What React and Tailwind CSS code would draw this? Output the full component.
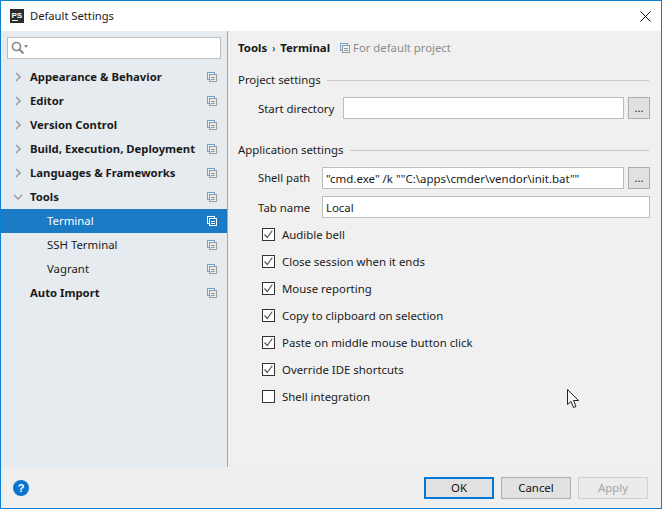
import React from "react";

function CopyIcon({ active, className = "" }) {
  const back = active ? "#ffffff" : "#6fa3d2";
  const front = active ? "#ffffff" : "#9a9a9a";
  return (
    <svg width="10" height="10" viewBox="0 0 10 10" className={className} shapeRendering="crispEdges" fill="none">
      <path d="M2.5 7.5H0.5V0.5H7.5V2.5" stroke={back} />
      <rect x="2.5" y="2.5" width="7" height="7" stroke={front} />
      <path d="M4 5.5H8M4 7.5H8" stroke={front} />
    </svg>
  );
}

function Chevron({ open }) {
  return (
    <svg width="10" height="10" viewBox="0 0 10 10" fill="none" stroke="#9a9a9a" strokeWidth="1.5">
      {open ? <path d="M1 3l4 4 4-4" /> : <path d="M3 1l4 4-4 4" />}
    </svg>
  );
}

function TreeRow({ label, level, arrow, open, bold, selected }) {
  return (
    <div className={"h-6 flex items-center pr-[10px] whitespace-nowrap " + (selected ? "bg-[#1a7ac4] text-white" : "text-[#1a1a1a]")}>
      <div className={"flex items-center flex-1 " + (level === 1 ? "pl-[46px]" : "pl-[12px]")}>
        {level === 0 && (
          <span className="w-[17px] flex items-center">{arrow && <Chevron open={open} />}</span>
        )}
        <span className={bold ? "font-bold text-[11.3px]" : ""}>{label}</span>
      </div>
      <CopyIcon active={selected} />
    </div>
  );
}

function Group({ title }) {
  return (
    <div className="flex items-center gap-[6px] h-5 pr-[12px]">
      <span className="pb-[1px]">{title}</span>
      <div className="flex-1 h-px bg-[#c8c8c8]" />
    </div>
  );
}

function Input({ value, className = "" }) {
  return (
    <div className={"h-[22px] bg-white border border-[#bdbdbd] flex items-center pl-[3px] pt-[1px] whitespace-nowrap overflow-hidden " + className}>
      {value}
    </div>
  );
}

function Dots() {
  return (
    <div className="w-[22px] h-[22px] bg-[#e1e1e1] border border-[#adadad] flex items-center justify-center text-[11px] leading-none pb-[1px] shrink-0">
      ...
    </div>
  );
}

function Check({ label, checked = true }) {
  return (
    <div className="h-[27px] flex items-center">
      <div className="w-[13px] h-[13px] border border-[#333333] bg-white flex items-center justify-center">
        {checked && (
          <svg width="11" height="11" viewBox="0 0 11 11" fill="none" stroke="#555555" strokeWidth="1.2">
            <path d="M1.5 5.5l2.8 3 5-7" />
          </svg>
        )}
      </div>
      <span className="ml-[7px] pt-[1px]">{label}</span>
    </div>
  );
}

function Btn({ label, variant }) {
  const cls =
    variant === "primary"
      ? "border-2 border-[#0078d7] bg-[#e1e1e1] text-[#111]"
      : variant === "disabled"
      ? "border border-[#d0d0d0] bg-[#ebebeb] text-[#a6a6a6]"
      : "border border-[#adadad] bg-[#e1e1e1] text-[#111]";
  return <div className={"w-[70px] h-[22px] flex items-center justify-center " + cls}>{label}</div>;
}

export default function App() {
  return (
    <div className="relative w-[662px] h-[509px] border border-[#0c7fd3] bg-[#f0f0f0] flex flex-col text-[11.4px] text-[#1a1a1a] font-['Noto_Sans',sans-serif] overflow-hidden">
      <div className="h-[30px] bg-white flex items-center pl-[9px] pr-[10px] shrink-0">
        <svg width="14" height="14" viewBox="0 0 14 14" className="mr-[6px]">
          <rect width="14" height="14" fill="#2b2b2b" />
          <rect x="2" y="11" width="6" height="1" fill="#fff" />
          <text x="1.5" y="8.5" fontSize="8" fontWeight="700" fill="#fff" fontFamily="Liberation Sans">PS</text>
        </svg>
        <span className="flex-1 text-[11.2px]">Default Settings</span>
        <svg width="11" height="11" viewBox="0 0 11 11" stroke="#111" fill="none">
          <path d="M0.5 0.5l10 10M10.5 0.5l-10 10" />
        </svg>
      </div>

      <div className="flex flex-1 min-h-0">
        <div className="w-[227px] bg-[#e6ebf0] border-r border-[#a8a8a8] shrink-0 flex flex-col">
          <div className="px-[6px] pt-[6px] pb-[6px]">
            <div className="h-[22px] bg-white border border-[#bdbdbd] flex items-center pl-[3px]">
              <svg width="18" height="14" viewBox="0 0 18 14" fill="none" stroke="#8a8a8a" strokeWidth="1.7">
                <circle cx="5.5" cy="5.5" r="4" />
                <path d="M8.5 8.5l4 4" strokeWidth="2.2" />
                <path d="M13 4h4l-2 3z" fill="#8a8a8a" stroke="none" />
              </svg>
            </div>
          </div>
          <TreeRow label="Appearance & Behavior" level={0} arrow bold />
          <TreeRow label="Editor" level={0} arrow bold />
          <TreeRow label="Version Control" level={0} arrow bold />
          <TreeRow label="Build, Execution, Deployment" level={0} arrow bold />
          <TreeRow label="Languages & Frameworks" level={0} arrow bold />
          <TreeRow label="Tools" level={0} arrow open bold />
          <TreeRow label="Terminal" level={1} selected />
          <TreeRow label="SSH Terminal" level={1} />
          <TreeRow label="Vagrant" level={1} />
          <TreeRow label="Auto Import" level={0} bold />
        </div>

        <div className="flex-1 pl-[10px] flex flex-col whitespace-nowrap">
          <div className="h-[34px] flex items-center">
            <span className="font-bold">Tools</span>
            <span className="mx-[5px] text-[10px]">›</span>
            <span className="font-bold">Terminal</span>
            <CopyIcon className="ml-[10px] mr-[3px]" />
            <span className="text-[#8c8c8c] text-[11.3px]">For default project</span>
          </div>
          <div className="mt-[5px]"><Group title="Project settings" /></div>
          <div className="flex items-center mt-[7px] pl-[20px]">
            <span className="w-[85px] pt-[1px]">Start directory</span>
            <Input className="w-[281px]" />
            <div className="ml-[4px]"><Dots /></div>
          </div>
          <div className="mt-[21px]"><Group title="Application settings" /></div>
          <div className="flex items-center mt-[7px] pl-[20px]">
            <span className="w-[64px] pt-[1px] text-[11.2px]">Shell path</span>
            <Input className="w-[302px] text-[11.5px]" value={'"cmd.exe" /k ""C:\\apps\\cmder\\vendor\\init.bat""'} />
            <div className="ml-[4px]"><Dots /></div>
          </div>
          <div className="flex items-center mt-[7px] pl-[20px]">
            <span className="w-[64px] pt-[1px]">Tab name</span>
            <Input className="w-[328px]" value="Local" />
          </div>
          <div className="mt-[3px] pl-[24px] flex flex-col">
            <Check label="Audible bell" />
            <Check label="Close session when it ends" />
            <Check label="Mouse reporting" />
            <Check label="Copy to clipboard on selection" />
            <Check label="Paste on middle mouse button click" />
            <Check label="Override IDE shortcuts" />
            <Check label="Shell integration" checked={false} />
          </div>
        </div>
      </div>

      <div className="h-[41px] shrink-0 bg-[#efefef] flex items-center pl-[12px] pr-[13px] pt-[1px]">
        <svg width="16" height="16" viewBox="0 0 16 16">
          <circle cx="8" cy="8" r="8" fill="#0a74d0" />
          <text x="8" y="12" textAnchor="middle" fontSize="11" fontWeight="700" fill="#fff" fontFamily="Liberation Sans">?</text>
        </svg>
        <div className="flex-1" />
        <div className="flex gap-[7px]">
          <Btn label="OK" variant="primary" />
          <Btn label="Cancel" />
          <Btn label="Apply" variant="disabled" />
        </div>
      </div>

      <svg width="14" height="20" viewBox="0 0 14 20" className="absolute left-[566px] top-[388px]" fill="#f4f4f4" stroke="#222">
        <path d="M0.5 0.5V15.5L4 12.5L6.5 18.5L9 17.5L6.5 11.5H11.5Z" />
      </svg>
    </div>
  );
}
